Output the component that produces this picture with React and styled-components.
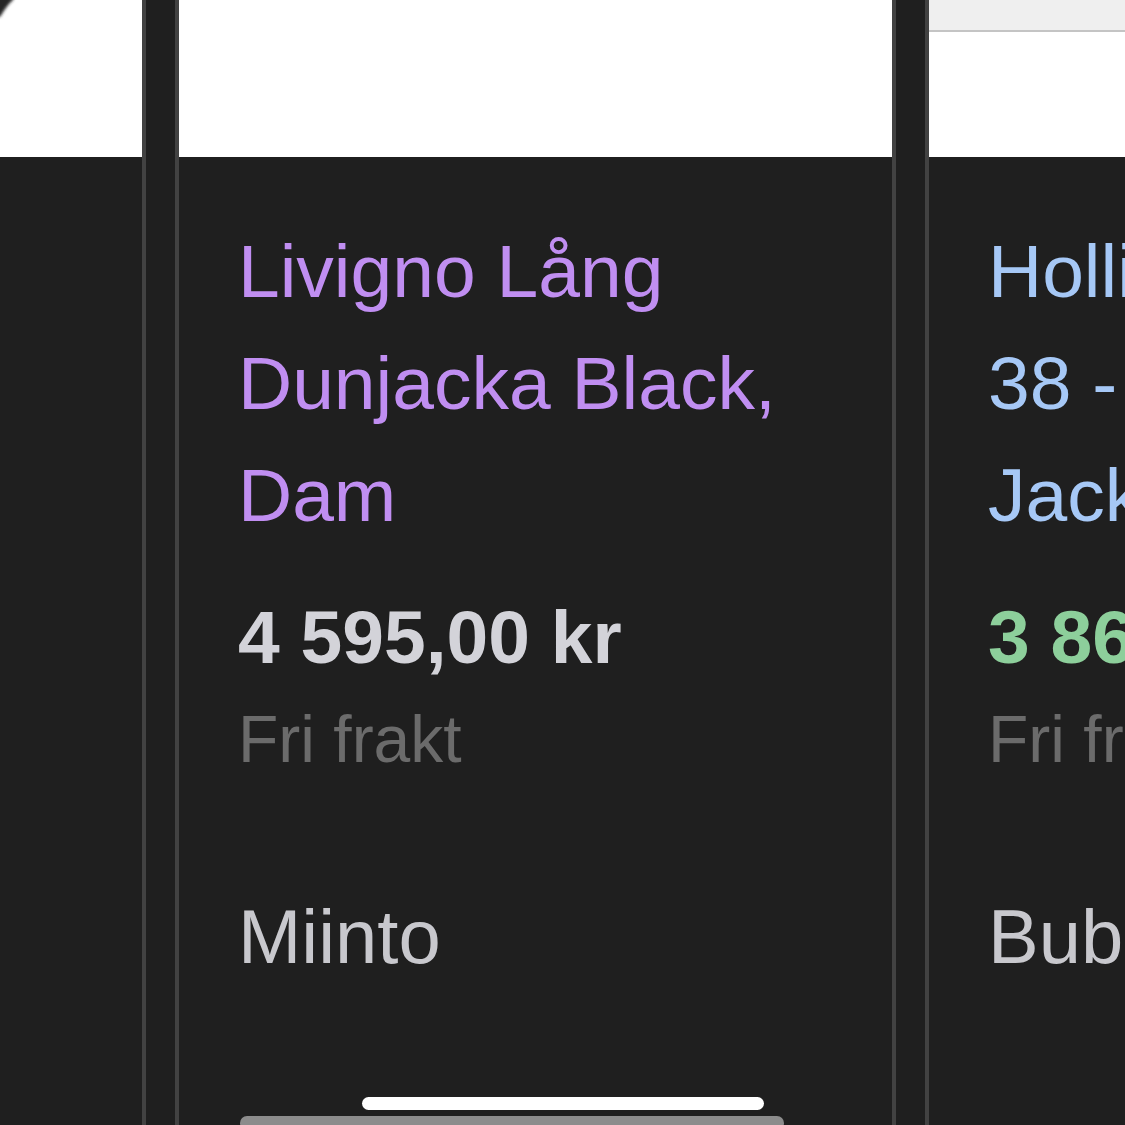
import React from 'react'
import styled, { createGlobalStyle } from 'styled-components'

const GlobalStyle = createGlobalStyle`
  html, body {
    margin: 0;
    padding: 0;
    background: #1f1f1f;
    overflow: hidden;
  }
  #root {
    width: 1125px;
    height: 1125px;
  }
`

const products = [
  {
    id: 1,
    title: 'Lång Dunjacka Svart, Dam',
    price: '4 295,00 kr',
    shipping: 'Fri frakt',
    store: 'Zalando',
    visited: true,
    image: 'corner',
  },
  {
    id: 2,
    title: 'Livigno Lång Dunjacka Black, Dam',
    price: '4 595,00 kr',
    shipping: 'Fri frakt',
    store: 'Miinto',
    visited: true,
    image: 'plain',
  },
  {
    id: 3,
    title: 'Hollies Dunjacka 38 - Livigno Lång Jacka Black',
    price: '3 865,00 kr',
    shipping: 'Fri frakt',
    store: 'Bubbleroom',
    visited: false,
    deal: true,
    image: 'banded',
  },
]

const App = () => {
  return (
    <>
      <GlobalStyle />
      <Screen>
        <Track>
          {products.map((p) => (
            <Card key={p.id}>
              <ProductImage $variant={p.image}>
                {p.image === 'corner' && (
                  <CornerShape width="40" height="30" viewBox="0 0 40 30">
                    <defs>
                      <filter id="soft" x="-50%" y="-50%" width="200%" height="200%">
                        <feGaussianBlur stdDeviation="1.4" />
                      </filter>
                    </defs>
                    <path d="M-4 -4 L14 -4 L13 0 Q7 5 0 17 L-4 17 Z" fill="#262626" filter="url(#soft)" />
                  </CornerShape>
                )}
              </ProductImage>
              <Body>
                <Title $visited={p.visited}>{p.title}</Title>
                <Price $deal={p.deal}>{p.price}</Price>
                <Shipping>{p.shipping}</Shipping>
                <Store>{p.store}</Store>
              </Body>
            </Card>
          ))}
        </Track>
        <ScrollIndicator />
        <HomeIndicator />
      </Screen>
    </>
  )
}

const Screen = styled.div`
  position: relative;
  width: 1125px;
  height: 1125px;
  overflow: hidden;
  background: #1f1f1f;
  font-family: 'Liberation Sans', Arial, sans-serif;
`

const Track = styled.div`
  display: flex;
  flex-direction: row;
  gap: 29px;
  margin-left: -575px;
  margin-top: -4px;
`

const Card = styled.div`
  flex: 0 0 721px;
  box-sizing: border-box;
  height: 1200px;
  border: 4px solid #424242;
  background: #1f1f1f;
  display: flex;
  flex-direction: column;
`

const ProductImage = styled.div`
  position: relative;
  height: 157px;
  background: ${({ $variant }) =>
    $variant === 'banded'
      ? 'linear-gradient(#efefef 0, #efefef 30px, #c4c4c4 30px, #c4c4c4 32px, #ffffff 32px)'
      : '#ffffff'};
  overflow: hidden;
`

const CornerShape = styled.svg`
  position: absolute;
  top: 0;
  right: 102px;
`

const Body = styled.div`
  padding: 58px 56px 0 59px;
  display: flex;
  flex-direction: column;
`

const Title = styled.div`
  font-size: 75px;
  line-height: 112px;
  color: ${({ $visited }) => ($visited ? '#c08ef1' : '#a6c8f6')};
`

const Price = styled.div`
  margin-top: 44px;
  font-size: 75px;
  line-height: 85px;
  font-weight: 700;
  color: ${({ $deal }) => ($deal ? '#8dcf9b' : '#d3d3d9')};
  white-space: nowrap;
`

const Shipping = styled.div`
  margin-top: 21px;
  font-size: 66px;
  line-height: 76px;
  color: #6b6b6b;
  white-space: nowrap;
`

const Store = styled.div`
  margin-top: 117px;
  font-size: 76px;
  line-height: 86px;
  color: #c8c8cd;
  white-space: nowrap;
`

const HomeIndicator = styled.div`
  position: absolute;
  left: 362px;
  top: 1097px;
  width: 402px;
  height: 13px;
  border-radius: 7px;
  background: #ffffff;
`

const ScrollIndicator = styled.div`
  position: absolute;
  left: 240px;
  top: 1116px;
  width: 544px;
  height: 14px;
  border-radius: 7px;
  background: #8c8c8c;
`

export default App
